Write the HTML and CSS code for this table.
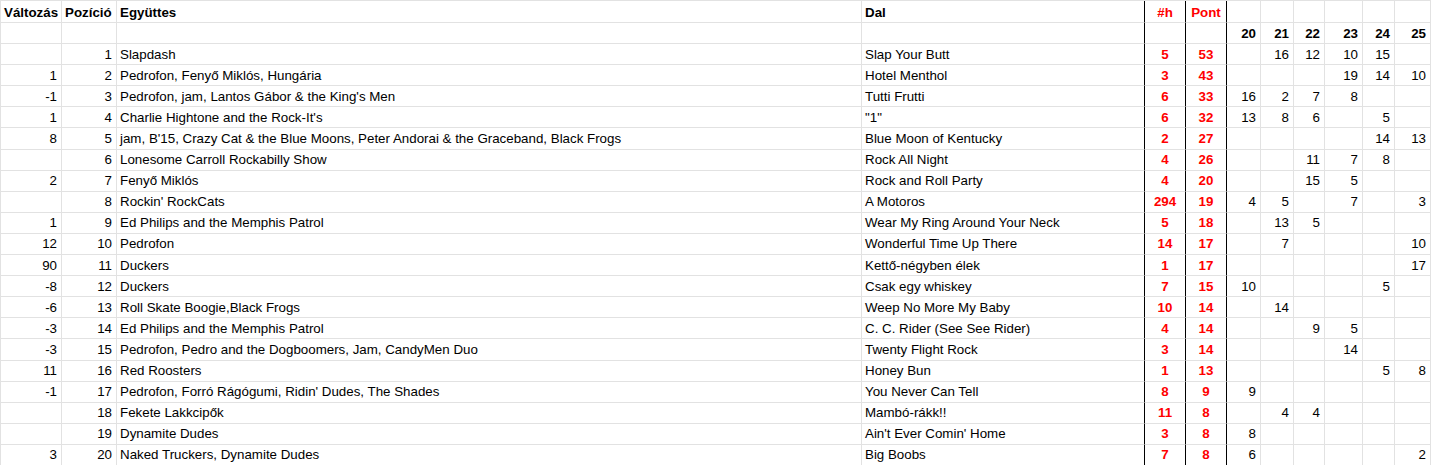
FILE: index.html
```html
<!DOCTYPE html>
<html lang="hu">
<head>
<meta charset="utf-8">
<title>Lista</title>
<link rel="stylesheet" href="styles.css">
</head>
<body>
<div class="sheet">
  <div class="row head"><div>Változás</div><div class="lft">Pozíció</div><div>Együttes</div><div>Dal</div><div>#h</div><div>Pont</div><div></div><div></div><div></div><div></div><div></div><div></div></div>
  <div class="row weeks"><div></div><div></div><div></div><div></div><div></div><div></div><div>20</div><div>21</div><div>22</div><div>23</div><div>24</div><div>25</div></div>
  <div class="row"><div></div><div>1</div><div>Slapdash</div><div>Slap Your Butt</div><div>5</div><div>53</div><div></div><div>16</div><div>12</div><div>10</div><div>15</div><div></div></div>
  <div class="row"><div>1</div><div>2</div><div>Pedrofon, Fenyő Miklós, Hungária</div><div>Hotel Menthol</div><div>3</div><div>43</div><div></div><div></div><div></div><div>19</div><div>14</div><div>10</div></div>
  <div class="row"><div>-1</div><div>3</div><div>Pedrofon, jam, Lantos Gábor &amp; the King's Men</div><div>Tutti Frutti</div><div>6</div><div>33</div><div>16</div><div>2</div><div>7</div><div>8</div><div></div><div></div></div>
  <div class="row"><div>1</div><div>4</div><div>Charlie Hightone and the Rock-It's</div><div>"1"</div><div>6</div><div>32</div><div>13</div><div>8</div><div>6</div><div></div><div>5</div><div></div></div>
  <div class="row"><div>8</div><div>5</div><div>jam, B'15, Crazy Cat &amp; the Blue Moons, Peter Andorai &amp; the Graceband, Black Frogs</div><div>Blue Moon of Kentucky</div><div>2</div><div>27</div><div></div><div></div><div></div><div></div><div>14</div><div>13</div></div>
  <div class="row"><div></div><div>6</div><div>Lonesome Carroll Rockabilly Show</div><div>Rock All Night</div><div>4</div><div>26</div><div></div><div></div><div>11</div><div>7</div><div>8</div><div></div></div>
  <div class="row"><div>2</div><div>7</div><div>Fenyő Miklós</div><div>Rock and Roll Party</div><div>4</div><div>20</div><div></div><div></div><div>15</div><div>5</div><div></div><div></div></div>
  <div class="row"><div></div><div>8</div><div>Rockin' RockCats</div><div>A Motoros</div><div>294</div><div>19</div><div>4</div><div>5</div><div></div><div>7</div><div></div><div>3</div></div>
  <div class="row"><div>1</div><div>9</div><div>Ed Philips and the Memphis Patrol</div><div>Wear My Ring Around Your Neck</div><div>5</div><div>18</div><div></div><div>13</div><div>5</div><div></div><div></div><div></div></div>
  <div class="row"><div>12</div><div>10</div><div>Pedrofon</div><div>Wonderful Time Up There</div><div>14</div><div>17</div><div></div><div>7</div><div></div><div></div><div></div><div>10</div></div>
  <div class="row"><div>90</div><div>11</div><div>Duckers</div><div>Kettő-négyben élek</div><div>1</div><div>17</div><div></div><div></div><div></div><div></div><div></div><div>17</div></div>
  <div class="row"><div>-8</div><div>12</div><div>Duckers</div><div>Csak egy whiskey</div><div>7</div><div>15</div><div>10</div><div></div><div></div><div></div><div>5</div><div></div></div>
  <div class="row"><div>-6</div><div>13</div><div>Roll Skate Boogie,Black Frogs</div><div>Weep No More My Baby</div><div>10</div><div>14</div><div></div><div>14</div><div></div><div></div><div></div><div></div></div>
  <div class="row"><div>-3</div><div>14</div><div>Ed Philips and the Memphis Patrol</div><div>C. C. Rider (See See Rider)</div><div>4</div><div>14</div><div></div><div></div><div>9</div><div>5</div><div></div><div></div></div>
  <div class="row"><div>-3</div><div>15</div><div>Pedrofon, Pedro and the Dogboomers, Jam, CandyMen Duo</div><div>Twenty Flight Rock</div><div>3</div><div>14</div><div></div><div></div><div></div><div>14</div><div></div><div></div></div>
  <div class="row"><div>11</div><div>16</div><div>Red Roosters</div><div>Honey Bun</div><div>1</div><div>13</div><div></div><div></div><div></div><div></div><div>5</div><div>8</div></div>
  <div class="row"><div>-1</div><div>17</div><div>Pedrofon, Forró Rágógumi, Ridin' Dudes, The Shades</div><div>You Never Can Tell</div><div>8</div><div>9</div><div>9</div><div></div><div></div><div></div><div></div><div></div></div>
  <div class="row"><div></div><div>18</div><div>Fekete Lakkcipők</div><div>Mambó-rákk!!</div><div>11</div><div>8</div><div></div><div>4</div><div>4</div><div></div><div></div><div></div></div>
  <div class="row"><div></div><div>19</div><div>Dynamite Dudes</div><div>Ain't Ever Comin' Home</div><div>3</div><div>8</div><div>8</div><div></div><div></div><div></div><div></div><div></div></div>
  <div class="row"><div>3</div><div>20</div><div>Naked Truckers, Dynamite Dudes</div><div>Big Boobs</div><div>7</div><div>8</div><div>6</div><div></div><div></div><div></div><div></div><div>2</div></div>
</div>
</body>
</html>
```
FILE: styles.css
```css
html, body {
  margin: 0;
  padding: 0;
  background: #ffffff;
}

.sheet {
  display: grid;
  grid-template-columns: 61px 55px 745px 283px 41px 41px 34px 33px 31px 38px 32px 36px;
  grid-template-rows: 22px;
  grid-auto-rows: 21.1px;
  width: max-content;
  border-left: 1px solid #e2e2e2;
  border-top: 1px solid #e2e2e2;
  font-family: "Liberation Sans", Arial, sans-serif;
  font-size: 13.33px;
  color: #000000;
}

.row {
  display: contents;
}

.row > div {
  box-sizing: border-box;
  border-right: 1px solid #e2e2e2;
  border-bottom: 1px solid #e2e2e2;
  padding: 0 4px 0 3px;
  white-space: nowrap;
  overflow: hidden;
  display: flex;
  align-items: center;
  justify-content: flex-end;
}

.row > div:nth-child(3),
.row > div:nth-child(4) {
  justify-content: flex-start;
}

.row > div:nth-child(5),
.row > div:nth-child(6) {
  justify-content: center;
  color: #ff0000;
  font-weight: bold;
  padding: 0;
}

.row > div:nth-child(4),
.row > div:nth-child(5),
.row > div:nth-child(6) {
  border-right-color: #000000;
}

.head > div {
  font-weight: bold;
  justify-content: flex-start;
  padding: 1px 0 0 3px;
}

.head > div:nth-child(5),
.head > div:nth-child(6) {
  justify-content: center;
  padding: 1px 0 0 0;
}

.weeks > div {
  font-weight: bold;
  padding-top: 1px;
}
```
